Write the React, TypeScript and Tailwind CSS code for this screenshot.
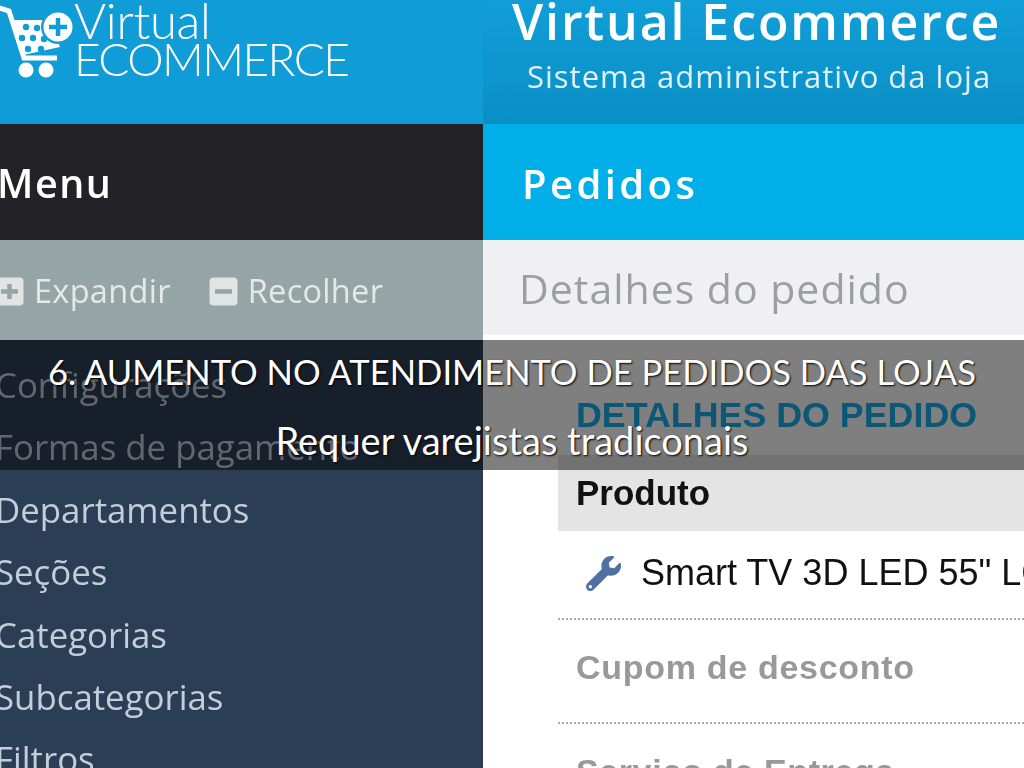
import { FaWrench } from 'react-icons/fa';

const menuItems = ['Configurações', 'Formas de pagamento', 'Departamentos', 'Seções', 'Categorias', 'Subcategorias', 'Filtros'];

function CartLogo() {
  const holes = [[26, 27], [37, 28], [22, 38], [33, 38], [44, 39], [28, 49], [41, 49]];
  return (
    <svg width="74" height="80" viewBox="0 0 74 80" className="shrink-0">
      <path d="M-4 7 L9 11 L24 58 L57 58" fill="none" stroke="#fff" strokeWidth="5" />
      <path d="M14 20 L50 20 L60 47 L23 55 Z" fill="#fff" />
      {holes.map(([x, y]) => (
        <circle key={`${x}-${y}`} cx={x} cy={y} r="3.2" fill="#109dd7" />
      ))}
      <circle cx="26" cy="70" r="7.5" fill="#fff" />
      <circle cx="46" cy="70" r="7.5" fill="#fff" />
      <circle cx="58" cy="27" r="17" fill="#109dd7" />
      <circle cx="58" cy="27" r="14.5" fill="#fff" />
      <path d="M58 18 V36 M49 27 H67" stroke="#109dd7" strokeWidth="4.5" />
    </svg>
  );
}

function SquareIcon({ plus }: { plus?: boolean }) {
  return (
    <svg width="29" height="29" viewBox="0 0 29 29" className="shrink-0">
      <rect x="0.5" y="0.5" width="28" height="28" rx="4" fill="#e2e4e4" />
      <path d={plus ? 'M14.5 7 V22 M6 14.5 H23' : 'M6 14.5 H23'} stroke="#95a5a6" strokeWidth="4.5" />
    </svg>
  );
}

export default function App() {
  return (
    <div className="relative h-[768px] w-[1024px] overflow-hidden bg-white font-['Open_Sans',sans-serif]">
      <div className="flex h-full flex-col blur-[0.7px]">
        <header className="flex h-[124px] shrink-0 bg-[#109dd7]">
          <div className="flex w-[483px] shrink-0 items-start">
            <CartLogo />
            <div className="-mt-[2px] font-['Lato',sans-serif] font-light text-white">
              <p className="h-[38px] text-[49px] leading-[44px] tracking-[-0.3px]">Virtual</p>
              <p className="text-[46px] leading-[46px] tracking-[-1.6px]">ECOMMERCE</p>
            </div>
          </div>
          <div className="flex-1 bg-gradient-to-b from-[#119ed8] to-[#0a8fc5] pl-[29px] text-white">
            <p className="-mt-[7px] text-[50px] leading-[56px] font-semibold tracking-[1.9px] whitespace-nowrap">Virtual Ecommerce</p>
            <p className="mt-[9px] pl-[15px] text-[31px] leading-[36px] tracking-[1px] text-[#dff1fa] whitespace-nowrap">Sistema administrativo da loja</p>
          </div>
        </header>

        <div className="flex min-h-0 flex-1">
          <aside className="flex w-[483px] shrink-0 flex-col bg-[#2c3e55]">
            <div className="flex h-[116px] shrink-0 items-center bg-[#232227] pt-[3px] text-[39.5px] font-semibold tracking-[1.5px] text-white">
              <span className="-ml-[3px]">Menu</span>
            </div>
            <div className="flex h-[100px] shrink-0 items-center bg-[#95a5a6] pt-[2px] text-[32.5px] tracking-[0.3px] text-[#e6e8e8]">
              <div className="-ml-[5px] flex items-center gap-[10px]">
                <SquareIcon plus />
                <span>Expandir</span>
              </div>
              <div className="ml-[38px] flex items-center gap-[10px]">
                <SquareIcon />
                <span>Recolher</span>
              </div>
            </div>
            <ul className="pt-[14px] text-[34.8px] leading-[62.4px] text-[#c3cfd8]">
              {menuItems.map((item) => (
                <li key={item} className="-ml-[5px] h-[62.4px] whitespace-nowrap">{item}</li>
              ))}
            </ul>
          </aside>

          <main className="flex min-w-0 flex-1 flex-col">
            <div className="flex h-[116px] shrink-0 items-center bg-[#00aee8] pt-[3px] pl-[39px] text-[40px] font-semibold tracking-[3.4px] text-white">
              Pedidos
            </div>
            <div className="flex h-[95px] shrink-0 items-center bg-[#f0f0f2] pt-[2px] pl-[36px] text-[41px] tracking-[1px] text-[#9c9ea0]">
              Detalhes do pedido
            </div>
            <div className="pl-[75px] font-['Liberation_Sans',sans-serif] whitespace-nowrap">
              <h2 className="mt-[57px] pl-[18px] text-[35.8px] leading-[46px] font-bold text-[#16aeea]">DETALHES DO PEDIDO</h2>
              <div className="mt-[17px] flex h-[76px] items-center bg-[#e4e4e4] pl-[18px] text-[35px] font-bold text-[#111]">
                Produto
              </div>
              <div className="flex h-[89px] items-center border-b-2 border-dotted border-[#aaa] pb-[3px] pl-[28px] text-[36px] text-[#111]">
                <FaWrench className="mr-[20px] h-[35px] w-[35px] shrink-0 text-[#506fa3]" />
                Smart TV 3D LED 55" LG
              </div>
              <div className="flex h-[104px] items-center border-b-2 border-dotted border-[#aaa] pb-[8px] pl-[18px] text-[34px] font-bold tracking-[0.7px] text-[#999]">
                Cupom de desconto
              </div>
              <div className="pt-[22px] pl-[18px] text-[34px] font-bold tracking-[0.6px] text-[#999]">Serviço de Entrega</div>
            </div>
          </main>
        </div>
      </div>

      <div className="absolute top-[340px] right-0 left-0 flex h-[130px] flex-col items-center bg-black/50 font-['Lato',sans-serif] text-white [text-shadow:1px_1px_2px_#000]">
        <p className="mt-[9px] text-[34.6px] leading-[46px] whitespace-nowrap">6. AUMENTO NO ATENDIMENTO DE PEDIDOS DAS LOJAS</p>
        <p className="mt-[22px] text-[38px] leading-[46px] whitespace-nowrap">Requer varejistas tradiconais</p>
      </div>
    </div>
  );
}
